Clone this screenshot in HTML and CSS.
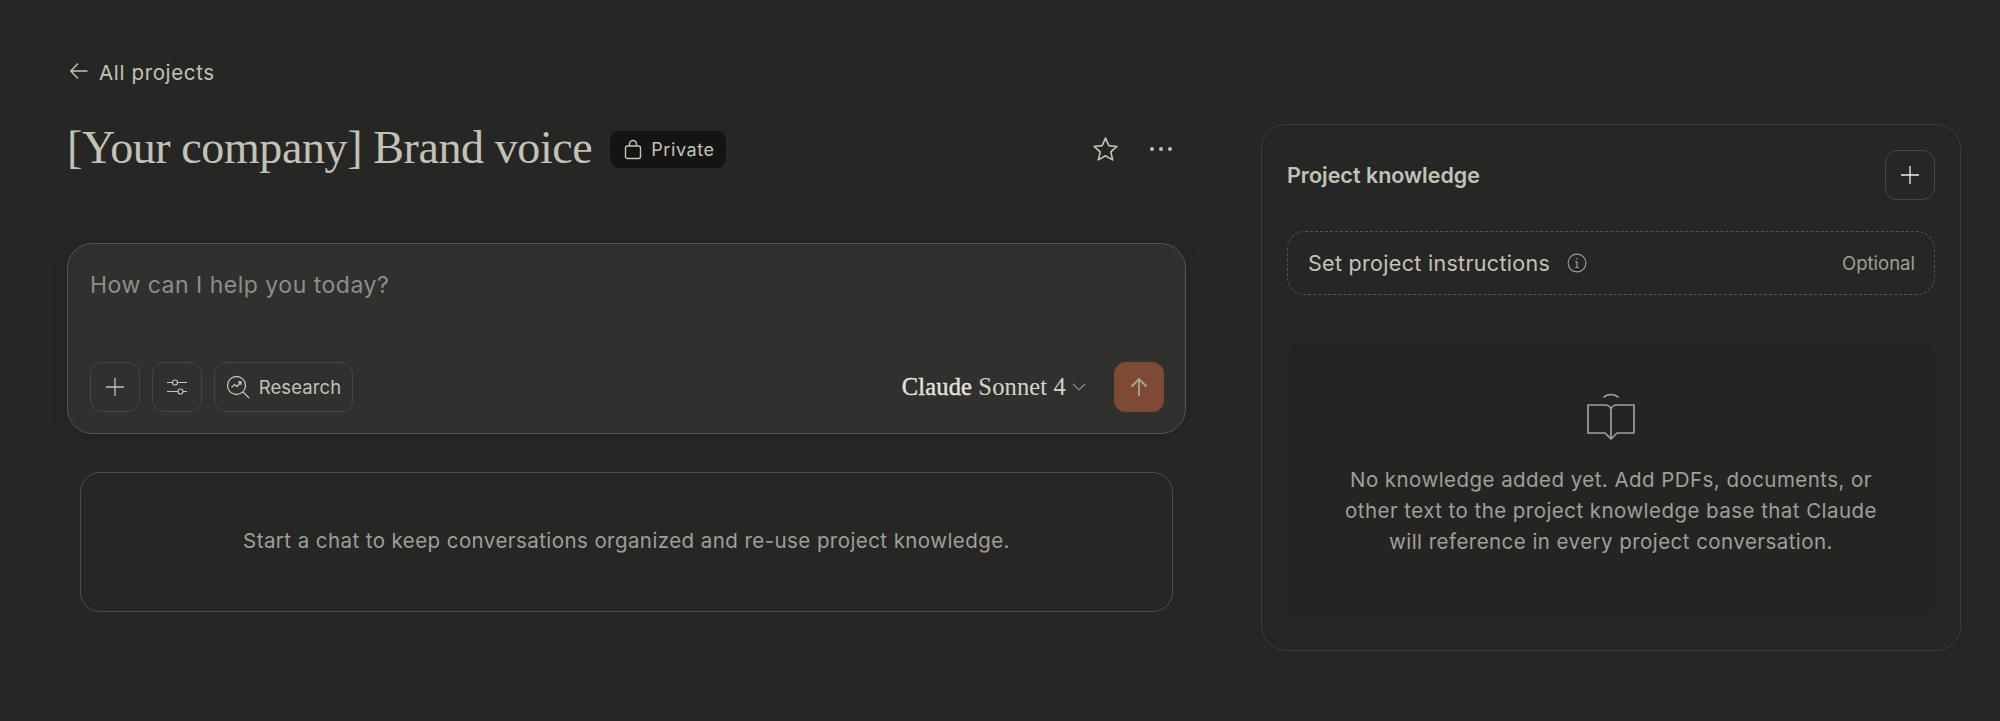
FILE: index.html
```html
<!DOCTYPE html>
<html lang="en">
<head>
<meta charset="utf-8">
<title>Brand voice</title>
<link rel="stylesheet" href="styles.css">
</head>
<body>
<main class="page">
  <section class="left">
    <a class="back">
      <svg class="ico-back" viewBox="0 0 20 20" fill="none" stroke="currentColor" stroke-width="1.400"><path d="M18.500 10H1.800M9 2.600 1.800 10 9 17.400"/></svg>
      <span>All projects</span>
    </a>
    <div class="title-row">
      <h1 class="title">[Your company] Brand voice</h1>
      <span class="pill">
        <svg class="ico-lock" viewBox="0 0 18 20" fill="none" stroke="currentColor" stroke-width="1.400"><rect x="1.500" y="6.500" width="15" height="12.500" rx="2"/><path d="M5.500 6.500V4.500a3.500 3.500 0 0 1 7 0v2"/></svg>
        Private
      </span>
      <span class="title-actions">
        <svg class="ico-star" viewBox="0 0 26 26" fill="none" stroke="currentColor" stroke-width="1.600" stroke-linejoin="round"><path d="m13 2 3.200 7.300 7.800.8-5.900 5.200 1.800 7.700L13 19l-6.900 4 1.800-7.700L2 10.100l7.800-.8z"/></svg>
        <svg class="ico-dots" viewBox="0 0 24 6" fill="currentColor"><circle cx="3" cy="3" r="2"/><circle cx="12" cy="3" r="2"/><circle cx="21" cy="3" r="2"/></svg>
      </span>
    </div>
    <div class="composer">
      <div class="placeholder">How can I help you today?</div>
      <div class="tools">
        <button class="btn square">
          <svg class="ico-plus" viewBox="0 0 20 20" stroke="currentColor" stroke-width="1.300"><path d="M10 1v18M1 10h18"/></svg>
        </button>
        <button class="btn square">
          <svg class="ico-sliders" viewBox="0 0 20 20" fill="none" stroke="currentColor" stroke-width="1.200"><path d="M0 5.500h5.500M10.500 5.500H20M0 14.500h11M16 14.500h4"/><circle cx="8" cy="5.500" r="2.500"/><circle cx="13.500" cy="14.500" r="2.500"/></svg>
        </button>
        <button class="btn research">
          <svg class="ico-research" viewBox="0 0 24 24" fill="none" stroke="currentColor" stroke-width="1.300"><circle cx="10.500" cy="10.500" r="9"/><path d="m17 17 6 6"/><path d="m5.500 12.500 3-3 2.500 2 3.500-4M12 7h3v3"/></svg>
          <span>Research</span>
        </button>
        <span class="model">
          <span class="model-name"><span class="model-brand">Claude</span> Sonnet 4</span>
          <svg class="ico-chev" viewBox="0 0 14 8" fill="none" stroke="currentColor" stroke-width="1.200"><path d="m1 1 6 6 6-6"/></svg>
        </span>
        <button class="send">
          <svg class="ico-up" viewBox="0 0 20 20" fill="none" stroke="currentColor" stroke-width="1.800"><path d="M10 19V2M2.500 9.500 10 2l7.500 7.500"/></svg>
        </button>
      </div>
    </div>
    <div class="hint">Start a chat to keep conversations organized and re-use project knowledge.</div>
  </section>
  <aside class="panel">
    <div class="panel-head">
      <h2 class="panel-title">Project knowledge</h2>
      <button class="btn square bright">
        <svg class="ico-plus" viewBox="0 0 20 20" stroke="currentColor" stroke-width="1.300"><path d="M10 1v18M1 10h18"/></svg>
      </button>
    </div>
    <div class="instructions">
      <span class="inst-label">Set project instructions</span>
      <svg class="ico-info" viewBox="0 0 18 18" fill="none" stroke="currentColor" stroke-width="1"><circle cx="9" cy="9" r="8"/><path d="M7.500 8H9v5M7.500 13h3"/><circle cx="8.800" cy="5.200" r=".7" fill="currentColor" stroke="none"/></svg>
      <span class="optional">Optional</span>
    </div>
    <div class="empty">
      <svg class="ico-book" viewBox="0 0 48 48" fill="none" stroke="currentColor" stroke-width="1.700" stroke-linejoin="round"><path d="M16.500 5.500c4-4 11-4 15 0"/><path d="M24 47V17c-1-3-3-4-6-4H1v28h17l6 6 6-6h17V13H30c-3 0-5 1-6 4"/></svg>
      <p class="empty-text">No knowledge added yet. Add PDFs, documents, or other text to the project knowledge base that Claude will reference in every project conversation.</p>
    </div>
  </aside>
</main>
</body>
</html>
```
FILE: styles.css
```css
* { box-sizing: border-box; }
html, body { margin: 0; height: 100%; }
body {
  background: #262624;
  color: #c3c2b7;
  font-family: "Inter", "Liberation Sans", sans-serif;
  overflow: hidden;
}
svg { display: block; flex: none; }
.page {
  display: flex;
  align-items: flex-start;
  padding: 0 39px 0 67px;
}
.left { width: 1119px; flex: none; display: flex; flex-direction: column; padding-top: 58px; }
.back { display: flex; align-items: center; gap: 10px; font-size: 20.500px; letter-spacing: .65px; height: 28px; color: #c3c2b7; }
.ico-back { width: 20px; height: 20px; margin-left: 2px; margin-top: -2px; }
.title-row { display: flex; align-items: center; margin-top: 31px; height: 64px; padding-right: 13px; }
.title {
  margin: -4px 0 0;
  font-family: "Liberation Serif", serif;
  font-weight: 400;
  font-size: 46px;
  color: #c3c2b7;
  letter-spacing: -.4px;
  white-space: nowrap;
}
.pill {
  display: flex;
  align-items: center;
  gap: 9px;
  margin-left: 18px;
  height: 37px;
  width: 116px;
  padding-left: 14px;
  border-radius: 9px;
  background: #141413;
  font-size: 18px;
  letter-spacing: .55px;
}
.ico-lock { width: 18px; height: 21px; }
.title-actions { margin-left: auto; display: flex; align-items: center; gap: 30px; color: #c3c2b7; }
.ico-star { width: 27px; height: 27px; }
.ico-dots { width: 24px; height: 6px; }
.composer {
  margin-top: 62px;
  height: 191px;
  border: 1px solid #55544f;
  border-radius: 25px;
  background: #30302e;
  box-shadow: 0 4px 20px rgba(0, 0, 0, .08);
  padding: 26px 21px 21px 22px;
  display: flex;
  flex-direction: column;
  justify-content: space-between;
}
.placeholder { font-size: 23px; letter-spacing: .5px; color: #8f8e86; line-height: 30px; }
.tools { display: flex; align-items: center; gap: 12px; }
.btn {
  display: flex;
  align-items: center;
  justify-content: center;
  height: 50px;
  padding: 0;
  background: transparent;
  border: 1px solid #454542;
  border-radius: 12px;
  color: #c3c2b7;
  font: inherit;
}
.square { width: 50px; }
.bright { color: #f0efe9; }
.ico-plus { width: 20px; height: 20px; }
.ico-sliders { width: 20px; height: 20px; }
.research { width: 139px; gap: 9px; font-size: 18.500px; letter-spacing: .1px; }
.ico-research { width: 24px; height: 24px; }
.model { margin-left: auto; display: flex; align-items: center; gap: 6px; margin-right: 16px; color: #d5d4cb; }
.model-name { font-family: "Liberation Serif", serif; font-size: 24.500px; letter-spacing: .15px; }
.model-brand { color: #e5e4dc; -webkit-text-stroke: .35px #e5e4dc; }
.ico-chev { width: 14px; height: 8px; color: #8f8e86; }
.send {
  width: 50px;
  height: 50px;
  display: flex;
  align-items: center;
  justify-content: center;
  padding: 0;
  background: #7f4a35;
  border: 0;
  border-radius: 12px;
  color: #a9a49b;
}
.ico-up { width: 20px; height: 20px; }
.hint {
  margin: 38px 13px 0;
  height: 140px;
  padding-bottom: 4px;
  border: 1px solid #4e4d49;
  border-radius: 20px;
  display: flex;
  align-items: center;
  justify-content: center;
  font-size: 20.500px;
  letter-spacing: .43px;
  color: #a09f96;
}
.panel {
  margin-left: 75px;
  margin-top: 124px;
  width: 700px;
  height: 527px;
  flex: none;
  border: 1px solid #3b3b38;
  border-radius: 25px;
  padding: 25px 25px 0;
}
.panel-head { display: flex; align-items: center; justify-content: space-between; }
.panel-title { margin: 0; font-size: 21.500px; font-weight: 600; color: #c3c2b7; }
.instructions {
  margin-top: 31px;
  height: 64px;
  border: 1px dashed #55544f;
  border-radius: 18px;
  display: flex;
  align-items: center;
  padding: 0 19px 0 20px;
}
.inst-label { font-size: 21.500px; letter-spacing: .3px; color: #c3c2b7; }
.ico-info { width: 20px; height: 20px; margin-left: 17px; color: #a09f96; }
.optional { margin-left: auto; font-size: 18.500px; color: #a09f96; }
.empty {
  margin-top: 46px;
  height: 280px;
  border-radius: 16px;
  background: #242522;
  display: flex;
  flex-direction: column;
  align-items: center;
  padding-top: 51px;
  color: #a09f96;
}
.ico-book { width: 48px; height: 48px; }
.empty-text {
  margin: 24px 0 0;
  width: 550px;
  text-align: center;
  font-size: 20.500px;
  letter-spacing: .45px;
  line-height: 31px;
}
```
